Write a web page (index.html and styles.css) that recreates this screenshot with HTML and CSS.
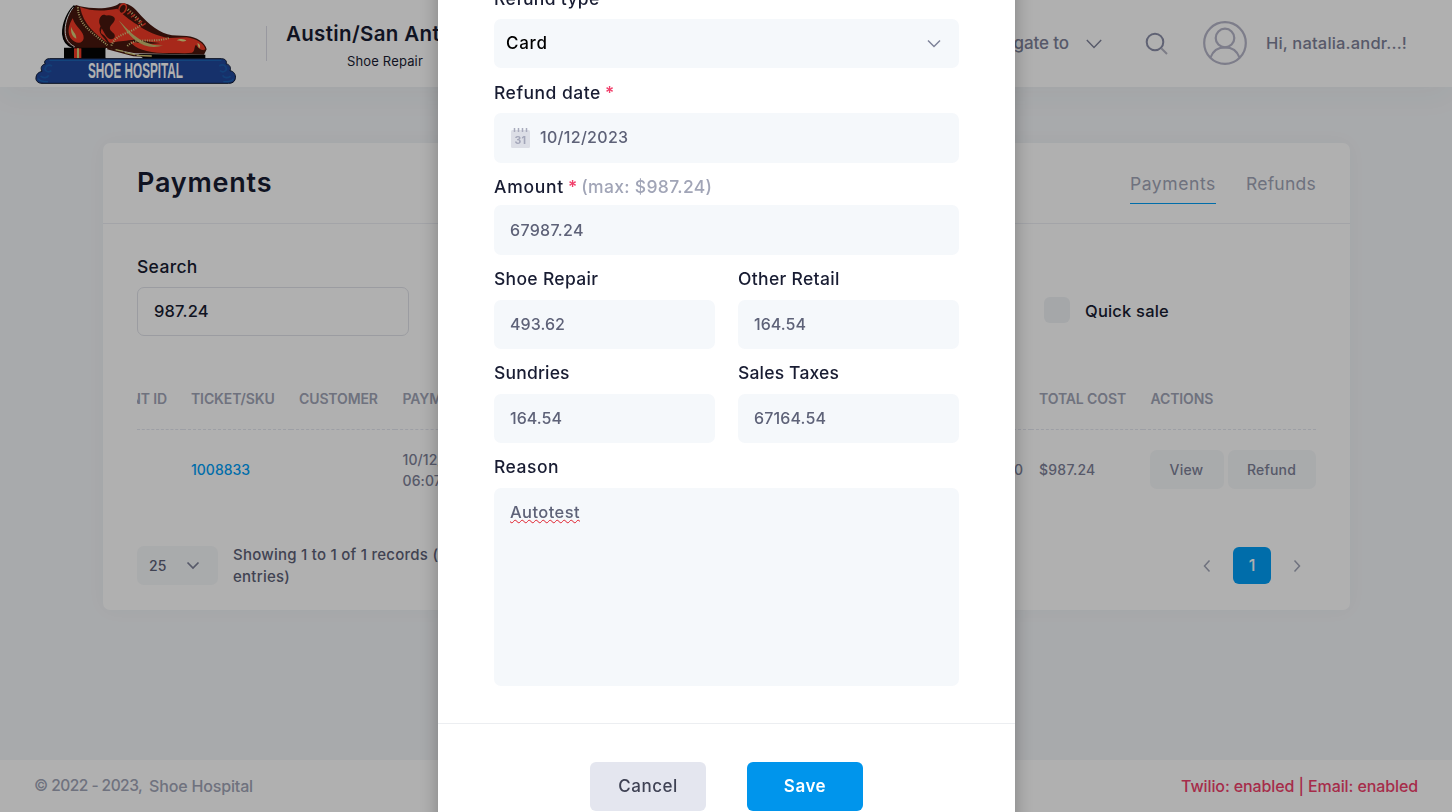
FILE: index.html
```
<!DOCTYPE html>
<html lang="en">
<head>
<meta charset="utf-8">
<title>Payments</title>
<link rel="stylesheet" href="styles.css">
</head>
<body>
<div class="page">
  <header class="topbar">
    <svg class="logo" viewBox="45 0 606 258" width="202" height="86">
      <!-- shoe -->
      <path d="M168 15 C146 32 127 66 128 102 C130 128 142 139 166 144 L262 144 L345 160 L552 164 L560 148 C556 128 530 110 500 108 L456 106 C420 99 388 77 350 32 C335 16 320 8 298 10 C280 28 220 28 180 19Z" fill="#48170e"/>
      <path d="M164 17 C144 35 128 70 129 102 C131 124 142 137 160 143" fill="none" stroke="#060606" stroke-width="6"/>
      <path d="M160 22 C142 44 133 75 136 100 C138 120 148 132 164 140" fill="none" stroke="#f2f2f2" stroke-width="3"/>
      <path d="M180 21 C215 34 250 34 292 26 C316 52 337 64 358 78 C378 94 412 108 447 114 L500 112 C532 116 553 132 556 148 C545 160 500 161 455 158 C500 150 498 132 455 128 C410 134 370 120 346 118 C318 124 300 122 278 128 C262 134 266 112 246 102 C232 88 268 66 262 50 C245 32 230 62 242 78 C230 100 252 110 262 128 C228 104 190 74 180 21Z" fill="#f23a27"/>
      <path d="M242 56 C252 44 276 42 284 54 C288 68 266 74 270 88 C274 98 288 100 284 112 C276 124 262 116 256 104 C246 86 236 72 242 56Z" fill="#48170e"/>
      <path d="M330 124 C370 134 430 134 445 120 C475 116 500 120 512 138 C518 154 480 161 430 159 C380 158 345 147 330 124Z" fill="#f23a27"/>
      <path d="M158 55 C166 82 193 94 191 115 C188 134 165 132 151 113 C140 92 148 73 158 55Z" fill="#f23a27"/>
      <path d="M153 80 C152 103 159 111 169 116 C169 99 158 96 153 80Z" fill="#d6cf7b"/>
      <path d="M296 61 C325 91 345 113 374 126 C396 135 415 138 430 136 C400 146 370 140 346 121 C322 101 310 80 296 61Z" fill="#c9bd70"/>
      <path d="M470 121 C480 114 495 117 499 122 C488 127 480 122 470 121Z M532 130 C542 132 542 142 537 146Z" fill="#e6dc86"/>
      <path d="M556 148 C545 160 528 162 508 162 C528 156 520 142 528 134 C538 150 548 152 556 148Z" fill="#48170e"/>
      <g fill="none" stroke="#ded58a" stroke-width="6" stroke-dasharray="3 4">
        <path d="M174 22 C174 80 230 105 262 136"/>
        <path d="M274 137 C288 98 332 103 366 72"/>
        <path d="M322 138 C348 110 400 130 446 114"/>
      </g>
      <path d="M324 28 L364 68" stroke="#ded58a" stroke-width="8" stroke-dasharray="3 5"/>
      <ellipse cx="308" cy="26" rx="10" ry="15" transform="rotate(25 308 26)" fill="#48170e" stroke="#f23a27" stroke-width="5"/>
      <path d="M322 43l10 -8M333 52l12 -9M344 62l12 -9M355 71l11 -8M365 78l12 -8" stroke="#f23a27" stroke-width="4"/>
      <path d="M132 143 H257 V176 H132Z M355 162 L556 164 V176 H370Z" fill="#050505"/>
      <path d="M257 147 L320 164 L370 173 H257Z" fill="#fff"/>
      <path d="M262 145 L340 166 L396 169" stroke="#48170e" stroke-width="6" fill="none"/>
      <path d="M287 149 L310 154 M314 157 L345 164 M350 166 L395 168" stroke="#d6cf7b" stroke-width="4"/>
      <path d="M162 145 h22 v30 h-22z" fill="#f23a27"/><path d="M171 145 h6 v30 h-6z" fill="#d6cf7b"/>
      <!-- plinth -->
      <path d="M88 176 H604 C616 176 622 184 618 191 C630 194 634 204 630 212 C642 214 648 224 646 236 C644 246 636 250 626 250 H66 C54 250 46 242 48 232 C50 218 60 216 66 214 C60 202 66 194 76 192 C70 184 78 176 88 176Z" fill="#21489b" stroke="#0c1730" stroke-width="3"/>
      <path d="M88 181 H604 M55 236 C60 246 72 245 84 245 M640 236 C636 246 622 245 610 245" stroke="#1c63b4" stroke-width="4" fill="none"/>
      <path d="M78 200 C70 212 84 220 94 212 M96 198 C90 194 84 194 78 200 M62 228 C70 236 82 234 86 226 M617 200 C624 212 610 220 600 212 M598 198 C604 194 612 194 617 200 M632 228 C624 236 612 234 608 226" stroke="#1c5cae" stroke-width="5" fill="none"/>
      <text x="204" y="235" class="logo-text" textLength="285" lengthAdjust="spacingAndGlyphs">SHOE HOSPITAL</text>
    </svg>
    <div class="store">
      <div class="store-name">Austin/San Antonio</div>
      <div class="store-type">Shoe Repair</div>
    </div>
    <div class="topnav">
      <span class="nav-to">Navigate to</span>
      <svg class="nav-chev" width="16" height="10" viewBox="0 0 16 10"><path d="M.8 1 L8 8.5 L15.2 1"/></svg>
      <svg class="search-icon" width="24" height="24" viewBox="0 0 24 24"><path class="handle" d="M16.5 16.5 L22 22"/><circle cx="10" cy="10" r="8.3"/></svg>
      <svg class="avatar" width="44" height="44" viewBox="0 0 44 44"><circle cx="22" cy="22" r="20.8"/><circle cx="22" cy="17" r="9.3"/><path d="M7.5 36.5 C10 29.500 16 26.300 22 26.300 S34 29.500 36.500 36.500"/></svg>
      <span class="hello">Hi, natalia.andr...!</span>
    </div>
  </header>

  <main class="main">
    <section class="card">
      <div class="card-head">
        <h1>Payments</h1>
        <nav class="tabs"><span class="tab active">Payments</span><span class="tab refunds">Refunds</span></nav>
      </div>
      <div class="card-body">
        <div class="filters">
          <div>
            <div class="label t-m">Search</div>
            <div class="search-input">987.24</div>
          </div>
          <div class="check"><span class="box"></span><span>Quick sale</span></div>
        </div>
        <div class="table">
          <div class="row head">
            <div class="cell first"><span>PAYMENT ID</span></div><div class="cell">TICKET/SKU</div><div class="cell">CUSTOMER</div><div class="cell">PAYMENT DATE</div><div class="cell"></div><div class="cell">TOTAL COST</div><div class="cell">ACTIONS</div>
          </div>
          <div class="row">
            <div class="cell"></div><div class="cell link">1008833</div><div class="cell"></div><div class="cell date">10/12/2023<br>06:07 AM</div><div class="cell right">$0.00</div><div class="cell cost">$987.24</div><div class="cell actions"><span class="btn-sm view">View</span><span class="btn-sm refund">Refund</span></div>
          </div>
        </div>
        <div class="pager">
          <div class="page-size"><span>25</span><svg width="14" height="9" viewBox="0 0 14 9"><path d="M1.500 1.500 L7 7 L12.500 1.500"/></svg></div>
          <div class="info">Showing 1 to 1 of 1 records (filtered from 1,204 entries)</div>
          <div class="pages">
            <svg width="8" height="14" viewBox="0 0 8 14"><path d="M6.500 1.500 L1.500 7 L6.500 12.500"/></svg>
            <span class="current">1</span>
            <svg class="next" width="8" height="14" viewBox="0 0 8 14"><path d="M1.500 1.500 L6.500 7 L1.500 12.500"/></svg>
          </div>
        </div>
      </div>
    </section>
  </main>

  <footer class="footer">
    <div class="copy"><span class="years">© 2022 - 2023,</span><span class="brand">Shoe Hospital</span></div>
    <div class="status">Twilio: enabled | Email: enabled</div>
  </footer>
</div>

<div class="backdrop"></div>
<div class="modal">
  <div class="modal-body">
    <div class="label t-m">Refund type</div>
    <div class="select"><span>Card</span><svg width="14" height="9" viewBox="0 0 14 9"><path d="M1 1.500 L7 7.500 L13 1.500"/></svg></div>
    <div class="label t-l">Refund date<b class="req">*</b></div>
    <div class="field tall date-field">
      <svg width="19" height="20" viewBox="0 0 19 20"><rect x="0" y="2" width="19" height="18" rx="1.500" fill="#dcdee6"/><path d="M3.500 0v4M7.500 0v4M11.500 0v4M15.500 0v4" stroke="#a9abbd" stroke-width="1.500"/><text x="9.500" y="15.500" class="cal-num">31</text></svg>
      <span>10/12/2023</span>
    </div>
    <div class="label amount"><span class="t-xl">Amount</span><b class="req">*</b><span class="max">(max: $987.24)</span></div>
    <div class="field tall amt">67987.24</div>
    <div class="split">
      <div><div class="label t-m">Shoe Repair</div><div class="field flat">493.62</div></div>
      <div><div class="label t-m">Other Retail</div><div class="field flat">164.54</div></div>
      <div><div class="label t-s">Sundries</div><div class="field flat">164.54</div></div>
      <div><div class="label t-s">Sales Taxes</div><div class="field">67164.54</div></div>
    </div>
    <div class="label t-l reason">Reason</div>
    <div class="textarea"><span>Autotest</span></div>
  </div>
  <div class="modal-foot"><span class="btn cancel">Cancel</span><span class="btn save">Save</span></div>
</div>
</body>
</html>
```
FILE: styles.css
```
* { box-sizing: border-box; }
body {
  margin: 0;
  font-family: Inter, "Open Sans", sans-serif;
  font-weight: 500;
  color: #181c32;
  overflow: hidden;
}
svg { display: block; flex: none; fill: none; }

.page {
  height: 812px;
  display: flex;
  flex-direction: column;
  background: #f4f6f9;
}

/* top bar */
.topbar {
  height: 87px;
  flex: none;
  display: flex;
  align-items: flex-start;
  padding: 0 45px 0 35px;
  background: #fff;
  box-shadow: 0 10px 30px rgba(60, 66, 80, .04);
}
.logo-text { font: 700 64px "Liberation Sans", sans-serif; fill: #fff; }
.store {
  margin: 26px 0 0 29px;
  height: 35px;
  padding-left: 18px;
  border-left: 1px solid #dcdde6;
  text-align: center;
  white-space: nowrap;
}
.store-name {
  width: 200px;
  margin-top: -5px;
  font-size: 20.500px;
  font-weight: 600;
  line-height: 26px;
  letter-spacing: .35px;
}
.store-type { font-size: 13px; font-weight: 400; line-height: 20px; margin-top: 4px; letter-spacing: .16px; }
.topnav {
  margin-left: auto;
  height: 87px;
  display: flex;
  align-items: center;
  color: #7e8299;
}
.nav-to { font-size: 17px; letter-spacing: -.1px; margin-top: -2px; }
.nav-chev { margin-left: 17px; stroke: #7e8299; stroke-width: 1.4; }
.search-icon { margin-left: 43px; stroke: #8b8fa8; stroke-width: 2; }
.search-icon .handle { stroke: #b5b5c3; }
.avatar { margin: -1px 0 0 34px; stroke: #b5b5c8; stroke-width: 2.2; }
.hello { margin: -2px 0 0 19px; font-size: 16.500px; letter-spacing: .17px; width: 141px; white-space: nowrap; }

/* card */
.main { flex: 1; padding: 56px 102px 0 103px; }
.card {
  height: 467px;
  background: #fff;
  border-radius: 7px;
  box-shadow: 0 0 20px rgba(60, 76, 90, .035);
}
.card-head {
  height: 81px;
  padding: 0 34px;
  display: flex;
  justify-content: space-between;
  align-items: center;
  border-bottom: 1px solid #eceef4;
}
h1 { margin: 0; font-size: 27px; font-weight: 600; line-height: 36px; letter-spacing: .78px; }
.tabs { display: flex; gap: 30px; color: #a1a5b7; font-size: 17.500px; font-weight: 400; }
.tab { height: 42px; line-height: 43px; letter-spacing: .25px; }
.tab.active { letter-spacing: .6px; border-bottom: 1px solid #009ef7; }
.card-body { padding: 33px 34px 0; }

.label { font-size: 17.500px; line-height: 20px; white-space: nowrap; }
.t-s { letter-spacing: .18px; }
.t-m { letter-spacing: .32px; }
.t-l { letter-spacing: .5px; }
.t-xl { letter-spacing: .74px; }

.filters { display: flex; height: 79px; }
.search-input {
  width: 272px;
  height: 49px;
  margin-top: 10px;
  padding: 0 16px;
  border: 1px solid #e1e3ea;
  border-radius: 7px;
  font-size: 16.500px;
  line-height: 47px;
  letter-spacing: .15px;
}
.check { margin: 40px 0 0 635px; height: 26px; display: flex; gap: 15px; font-size: 16.500px; line-height: 28px; letter-spacing: .2px; }
.box { width: 26px; height: 26px; border-radius: 6px; background: #eff2f5; }

.table { margin-top: 33px; overflow: hidden; }
.row {
  display: grid;
  grid-template-columns: 46px 108px 103.500px 120px 516.500px 111.500px 173.500px;
  height: 81px;
  align-items: center;
  padding-bottom: 2px;
  font-size: 14px;
  color: #7e8299;
}
.row.head { height: 61px; padding-bottom: 0; font-weight: 600; color: #a1a5b7; letter-spacing: -.12px; }
.row.head .cell { height: 61px; line-height: 59px; border-bottom: 1px dashed #e4e6ef; }
.cell { padding-left: 8px; white-space: nowrap; }
.cell.first { padding: 0 16px 0 0; display: flex; justify-content: flex-end; overflow: hidden; }
.cell.link { color: #009ef7; }
.cell.date { line-height: 21px; letter-spacing: .1px; }
.cell.right { text-align: right; padding-right: 8px; }
.cell.cost { letter-spacing: .25px; }
.cell.actions { display: flex; gap: 4px; padding-left: 7px; }
.btn-sm { height: 39px; line-height: 40px; text-align: center; border-radius: 7px; background: #f5f8fa; letter-spacing: .2px; }
.btn-sm.view { width: 74px; }
.btn-sm.refund { width: 88px; }

.pager { margin-top: 34px; display: flex; align-items: flex-start; }
.page-size {
  width: 81px;
  height: 39px;
  margin-top: 1px;
  padding: 0 18px 0 12px;
  display: flex;
  align-items: center;
  justify-content: space-between;
  border-radius: 7px;
  background: #f5f8fa;
  color: #5e6278;
  font-size: 14px;
}
.page-size svg { stroke: #7e8299; stroke-width: 1.700; }
.info { margin: -1px 0 0 15px; width: 350px; font-size: 15px; line-height: 22px; color: #5e6278; letter-spacing: .25px; }
.pages { margin: 2px 15px 0 auto; display: flex; align-items: center; gap: 22px; }
.pages svg { stroke: #a1a5b7; stroke-width: 1.500; }
.current { width: 38px; height: 37px; border-radius: 6px; background: #009ef7; color: #fff; text-align: center; font-size: 16px; line-height: 37px; }

/* footer */
.footer {
  height: 52px;
  flex: none;
  display: flex;
  justify-content: space-between;
  padding: 0 34px;
  background: #fff;
  font-size: 16px;
  line-height: 52px;
  color: #a1a5b7;
}
.copy { display: flex; gap: 7px; }
.years { width: 108px; font-size: 15.500px; letter-spacing: -.53px; white-space: nowrap; }
.brand { letter-spacing: -.16px; }
.status { color: #f1416c; letter-spacing: -.11px; }

/* modal */
.backdrop { position: fixed; inset: 0; background: rgba(0, 0, 0, .31); }
.modal {
  position: fixed;
  top: -40px;
  left: 438px;
  width: 577px;
  height: 880px;
  background: #fff;
  box-shadow: 0 0 18px rgba(0, 0, 0, .28);
}
.modal-body { height: 764px; padding: 29px 56px 0; border-bottom: 1px solid #eceef1; }
.select, .field {
  height: 49px;
  border-radius: 7px;
  background: #f5f8fb;
  font-size: 16px;
  line-height: 49px;
}
.select {
  display: flex;
  align-items: center;
  justify-content: space-between;
  margin: 10px 0 15px;
  padding: 0 18px 0 12px;
  font-size: 17px;
  letter-spacing: .7px;
  color: #000;
}
.select svg { stroke: #7e8299; stroke-width: 1.500; }
.field { margin: 11px 0 14px; padding: 0 16px; color: #5e6278; letter-spacing: .14px; }
.field.tall { height: 50px; line-height: 50px; letter-spacing: .3px; }
.field.flat { letter-spacing: .05px; }
.date-field { display: flex; align-items: center; gap: 10px; margin-top: 10px; padding-left: 17px; }
.date-field span { line-height: 48px; margin-top: -2px; }
.cal-num { font: 700 10.500px Inter, sans-serif; fill: #a3a6b9; text-anchor: middle; }
.amount { margin-bottom: 8px; display: flex; }
.field.amt { margin-top: 8px; }
.req { color: #f1416c; margin-left: 4px; font-weight: 600; font-size: 17px; letter-spacing: 0; }
.max { margin-left: 4px; color: #a1a5b7; letter-spacing: .32px; }
.split { display: grid; grid-template-columns: 221px 221px; column-gap: 23px; }
.textarea {
  height: 198px;
  margin-top: 11px;
  padding: 12px 16px;
  border-radius: 7px;
  background: #f5f8fb;
  color: #5e6278;
  font-size: 16.500px;
  line-height: 24px;
  letter-spacing: .41px;
}
.textarea span { text-decoration: underline wavy #e0202c 1px; text-underline-offset: 1px; text-decoration-skip-ink: none; }
.modal-foot { display: flex; justify-content: center; gap: 41px; padding-top: 38px; }
.btn { width: 116px; height: 49px; border-radius: 6px; text-align: center; font-size: 17px; line-height: 49px; letter-spacing: .5px; }
.cancel { background: #e4e6ef; color: #3f4254; }
.save { background: #0095ec; color: #fff; font-weight: 600; }
```
